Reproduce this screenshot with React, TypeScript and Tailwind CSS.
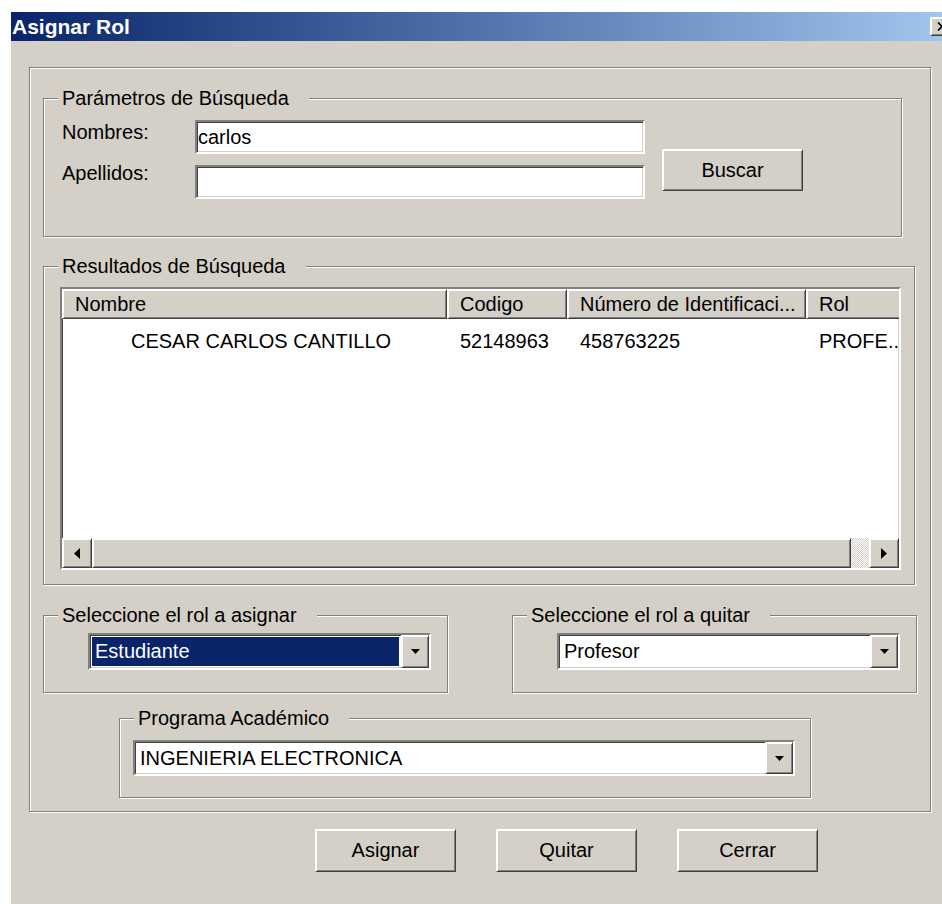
import React from 'react';

// classic 3D edge styles
const etched = 'border border-[#808080] shadow-[inset_1px_1px_0_#fff,1px_1px_0_#fff]';
const sunken =
  'border-2 border-t-[#808080] border-l-[#808080] border-r-white border-b-white shadow-[inset_1px_1px_0_#404040,inset_-1px_-1px_0_#d4d0c8]';
const raised =
  'border border-t-white border-l-white border-r-[#404040] border-b-[#404040] shadow-[inset_1px_1px_0_#fff,inset_-1px_-1px_0_#808080]';

interface GroupProps {
  title: string;
  className?: string;
  children?: React.ReactNode;
}

function Group({ title, className = '', children }: GroupProps) {
  return (
    <fieldset className={`${etched} m-0 p-0 min-w-0 ${className}`}>
      <legend className="ml-[14px] pl-[4px] pr-[20px] leading-[22px] bg-[#d4d0c8]">{title}</legend>
      {children}
    </fieldset>
  );
}

function Field({ value = '' }: { value?: string }) {
  return (
    <div className={`${sunken} w-[450px] h-[34px] bg-white flex items-center pl-[1px]`}>
      {value}
    </div>
  );
}

function Button({ label, className = '' }: { label: string; className?: string }) {
  return (
    <button type="button" className={`${raised} bg-[#d4d0c8] flex items-center justify-center ${className}`}>
      {label}
    </button>
  );
}

function DownArrow() {
  return (
    <svg width="9" height="5" viewBox="0 0 9 5">
      <path d="M0 0h9L4.5 5z" fill="#000" />
    </svg>
  );
}

interface ComboProps {
  value: string;
  selected?: boolean;
  className?: string;
}

function Combo({ value, selected, className = '' }: ComboProps) {
  return (
    <div className={`${sunken} bg-white flex ${className}`}>
      <div className="flex-1 flex p-[2px]">
        <div className={`flex-1 flex items-center pl-[3px] ${selected ? 'bg-[#0a246a] text-white' : ''}`}>
          {value}
        </div>
      </div>
      <div className={`${raised} w-[28px] bg-[#d4d0c8] flex items-center justify-center`}>
        <DownArrow />
      </div>
    </div>
  );
}

const columns = [
  { title: 'Nombre', width: 'w-[385px]' },
  { title: 'Codigo', width: 'w-[120px]' },
  { title: 'Número de Identificaci...', width: 'w-[239px]' },
  { title: 'Rol', width: 'w-[150px]' },
];

function ResultsList() {
  return (
    <div className={`${sunken} ml-[16px] mt-[10px] w-[841px] h-[283px] bg-white flex flex-col overflow-hidden`}>
      <div className="flex h-[30px] shrink-0">
        {columns.map((col) => (
          <div
            key={col.title}
            className={`${raised} ${col.width} shrink-0 bg-[#d4d0c8] flex items-center pl-[12px] whitespace-nowrap`}
          >
            {col.title}
          </div>
        ))}
      </div>

      <div className="flex-1">
        <div className="flex h-[30px] mt-[7px] items-center whitespace-nowrap">
          <div className="w-[385px] shrink-0 pl-[69px]">CESAR CARLOS CANTILLO</div>
          <div className="w-[120px] shrink-0 pl-[13px]">52148963</div>
          <div className="w-[239px] shrink-0 pl-[13px]">458763225</div>
          <div className="w-[90px] shrink-0 pl-[13px]">PROFE..</div>
        </div>
      </div>

      {/* horizontal scroll bar */}
      <div className="flex h-[30px] shrink-0">
        <div className={`${raised} w-[30px] bg-[#d4d0c8] flex items-center justify-center`}>
          <svg width="6" height="11" viewBox="0 0 6 11">
            <path d="M6 0v11L0 5.5z" fill="#000" />
          </svg>
        </div>
        <div className={`${raised} w-[759px] bg-[#d4d0c8]`} />
        <div className="w-[18px] bg-[image:repeating-conic-gradient(#fff_0_25%,#d4d0c8_0_50%)] bg-[length:2px_2px]" />
        <div className={`${raised} w-[30px] bg-[#d4d0c8] flex items-center justify-center`}>
          <svg width="6" height="11" viewBox="0 0 6 11">
            <path d="M0 0v11L6 5.5z" fill="#000" />
          </svg>
        </div>
      </div>
    </div>
  );
}

export default function App() {
  return (
    <div className="w-[942px] h-[904px] overflow-hidden bg-white pt-[12px] pl-[11px] font-['Liberation_Sans',Arial,sans-serif] text-[20px] leading-[23px] text-black">
      <div className="w-[955px] h-[892px] bg-[#d4d0c8] flex flex-col">
        {/* title bar */}
        <div className="h-[29px] shrink-0 flex items-center bg-linear-to-r from-[#0a246a] to-[#a6caf0]">
          <span className="pl-[1px] text-white font-bold text-[21px]">Asignar Rol</span>
          <div className={`${raised} ml-auto mr-[12px] w-[24px] h-[19px] bg-[#d4d0c8] flex items-center justify-center`}>
            <svg width="10" height="9" viewBox="0 0 10 9">
              <path d="M1 0.5l8 8M9 0.5l-8 8" stroke="#000" strokeWidth="1.6" />
            </svg>
          </div>
        </div>

        <div className={`${etched} mt-[26px] ml-[18px] w-[902px] h-[745px] flex flex-col pl-[13px]`}>
          <Group title="Parámetros de Búsqueda" className="mt-[19px] w-[859px] h-[150px]">
            <div className="flex mt-[11px] pl-[18px]">
              <div className="grid grid-cols-[133px_450px] gap-y-[11px] items-start">
                <label className="pt-[1px]">Nombres:</label>
                <Field value="carlos" />
                <label className="-mt-[3px]">Apellidos:</label>
                <Field />
              </div>
              <Button label="Buscar" className="ml-[17px] mt-[29px] w-[141px] h-[42px]" />
            </div>
          </Group>

          <Group title="Resultados de Búsqueda" className="mt-[18px] w-[872px] h-[330px]">
            <ResultsList />
          </Group>

          <div className="flex mt-[19px] w-[874px] justify-between">
            <Group title="Seleccione el rol a asignar" className="w-[405px] h-[89px]">
              <Combo value="Estudiante" selected className="ml-[44px] mt-[7px] w-[343px] h-[37px]" />
            </Group>
            <Group title="Seleccione el rol a quitar" className="w-[405px] h-[89px]">
              <Combo value="Profesor" className="ml-[44px] mt-[7px] w-[343px] h-[37px]" />
            </Group>
          </div>

          <Group title="Programa Académico" className="ml-[76px] mt-[14px] w-[692px] h-[91px]">
            <Combo value="INGENIERIA ELECTRONICA" className="ml-[13px] mt-[11px] w-[662px] h-[36px]" />
          </Group>
        </div>

        <div className="flex gap-[40px] ml-[304px] mt-[17px]">
          <Button label="Asignar" className="w-[141px] h-[43px]" />
          <Button label="Quitar" className="w-[141px] h-[43px]" />
          <Button label="Cerrar" className="w-[141px] h-[43px]" />
        </div>
      </div>
    </div>
  );
}
